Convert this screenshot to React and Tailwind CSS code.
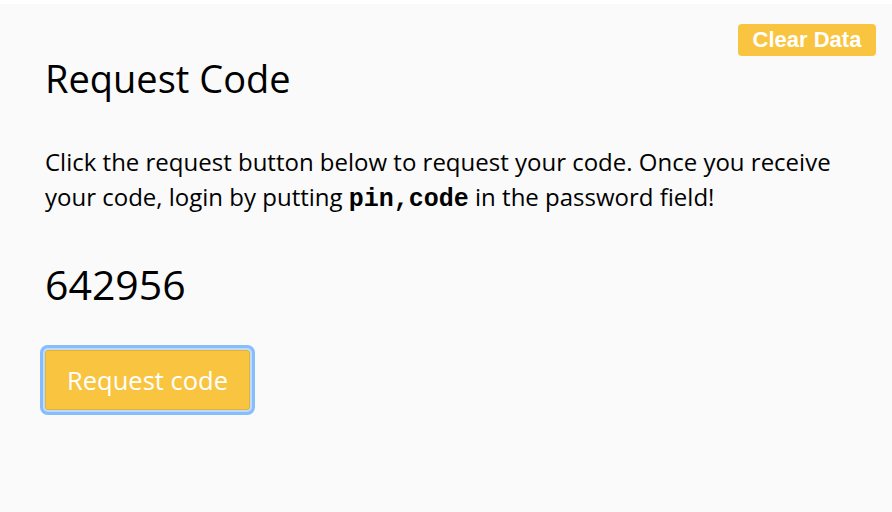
import React from "react";

export default function App() {
  return (
    <div className="w-[892px] h-[512px] bg-white pt-1" style={{ fontFamily: '"Open Sans", sans-serif' }}>
      <div className="relative h-full bg-[#fafafa] px-[45px] pt-[50px]">
        <button
          className="absolute right-[16px] top-[20px] h-[32px] w-[138px] rounded-[4px] bg-[#f9c440] text-[22px] font-semibold leading-none text-white"
          style={{ fontFamily: '"Liberation Sans", Arial, sans-serif' }}
        >
          Clear Data
        </button>
        <h1 className="text-[38px] leading-[48px] text-black">Request Code</h1>
        <p className="mt-[42px] w-[810px] text-[24px] leading-[35px] text-black">
          Click the request button below to request your code. Once you receive
          your code, login by putting{" "}
          <code className="text-[25px] font-bold leading-none" style={{ fontFamily: '"Liberation Mono", "Courier New", monospace' }}>
            pin,code
          </code>{" "}
          in the password field!
        </p>
        <div className="mt-[42px] text-[41px] leading-[56px] text-black">642956</div>
        <button className="mt-[38px] h-[60px] w-[205px] rounded-[3px] border border-[#e3b23c] bg-[#f9c440] text-[25.5px] text-white shadow-[0_0_0_2px_#bcdcff,0_0_0_5px_#88bdfb]">
          Request code
        </button>
      </div>
    </div>
  );
}
